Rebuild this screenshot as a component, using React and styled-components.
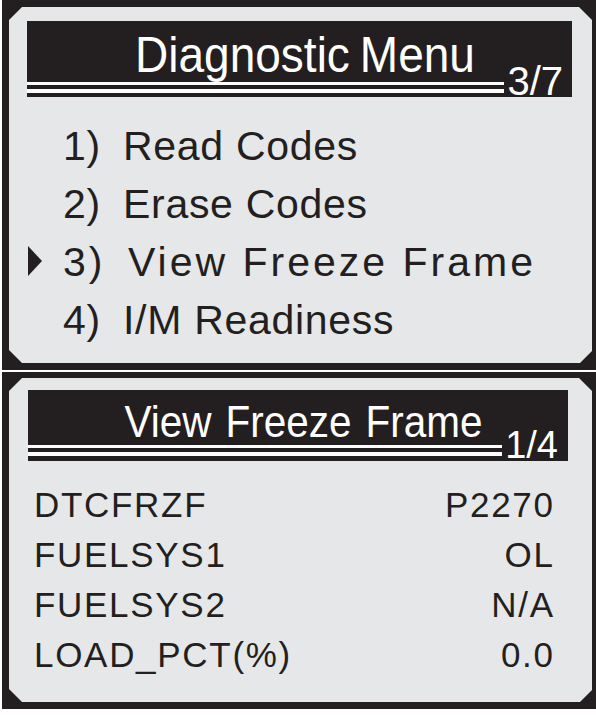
import React from "react";
import styled, { createGlobalStyle } from "styled-components";

const ink = "#231f20";
const paper = "#e6e7e8";

const GlobalStyle = createGlobalStyle`
  html, body {
    margin: 0;
    padding: 0;
    background: #ffffff;
  }
  body {
    font-family: "Liberation Sans", Arial, sans-serif;
    color: ${ink};
  }
`;

const Page = styled.div`
  display: flex;
  flex-direction: column;
  gap: 2px;
  width: 596px;
`;

const Screen = styled.div`
  margin-left: 2px;
  width: 594px;
  height: ${(p) => p.$height}px;
  box-sizing: border-box;
  padding: ${(p) => p.$top}px 4px 7px 7px;
  background: ${ink};
  display: flex;
`;

const Panel = styled.div`
  flex: 1;
  background: ${paper};
  box-sizing: border-box;
  padding: ${(p) => p.$pad};
  clip-path: polygon(
    13px 0,
    calc(100% - 13px) 0,
    100% 13px,
    100% calc(100% - 12px),
    calc(100% - 12px) 100%,
    13px 100%,
    0 calc(100% - 13px),
    0 13px
  );
`;

const Header = styled.div`
  display: grid;
  height: ${(p) => p.$height}px;
  background: ${ink};
  color: #ffffff;
`;

const Title = styled.div`
  grid-area: 1 / 1;
  align-self: start;
  text-align: center;
  padding-left: 12px;
  margin-top: ${(p) => p.$top}px;
  font-size: ${(p) => p.$size}px;
  line-height: 1;
  word-spacing: ${(p) => p.$words}px;
  transform: scaleX(0.92);
`;

const Footer = styled.div`
  grid-area: 1 / 1;
  align-self: end;
  display: flex;
  align-items: flex-end;
  padding: 0 ${(p) => p.$right}px ${(p) => p.$bottom}px 0;
`;

const Rule = styled.div`
  flex: 1;
  height: 4px;
  border-top: 3px solid #ffffff;
  border-bottom: 4px solid #ffffff;
  margin: 0 3px ${(p) => p.$lift}px 0;
`;

const Counter = styled.span`
  font-size: ${(p) => p.$size}px;
  line-height: ${(p) => p.$size - 10}px;
`;

const Menu = styled.ul`
  list-style: none;
  margin: 20px 0 0;
  padding: 0 0 0 1px;
`;

const MenuRow = styled.li`
  display: flex;
  align-items: center;
  height: 58px;
  font-size: 41px;
  line-height: 58px;
  letter-spacing: ${(p) => (p.$selected ? 3 : 0.7)}px;
`;

const Marker = styled.span`
  width: 35px;
  display: flex;
  align-items: center;
  &::before {
    content: "";
    display: ${(p) => (p.$on ? "block" : "none")};
    border-top: 15px solid transparent;
    border-bottom: 15px solid transparent;
    border-left: 14px solid ${ink};
    margin-top: -2px;
  }
`;

const Num = styled.span`
  width: 60px;
`;

const Label = styled.span`
  margin-left: ${(p) => (p.$selected ? 5 : 0)}px;
`;

const Data = styled.div`
  margin-top: 19px;
  padding: 0 15px 0 6px;
`;

const DataRow = styled.div`
  display: flex;
  justify-content: space-between;
  height: 50px;
  font-size: 35px;
  line-height: 50px;
  letter-spacing: 1.7px;
`;

const Value = styled.span`
  margin-right: -1.7px;
`;

const menuItems = [
  ["1)", "Read Codes"],
  ["2)", "Erase Codes"],
  ["3)", "View Freeze Frame"],
  ["4)", "I/M Readiness"],
];

const freezeData = [
  ["DTCFRZF", "P2270"],
  ["FUELSYS1", "OL"],
  ["FUELSYS2", "N/A"],
  ["LOAD_PCT(%)", "0.0"],
];

function ScreenHeader({ title, count, height, titleSize, titleTop, words, countSize, right, bottom, lift }) {
  return (
    <Header $height={height}>
      <Title $size={titleSize} $top={titleTop} $words={words}>
        {title}
      </Title>
      <Footer $right={right} $bottom={bottom}>
        <Rule $lift={lift} />
        <Counter $size={countSize}>{count}</Counter>
      </Footer>
    </Header>
  );
}

export default function App() {
  const selected = 2;
  return (
    <>
      <GlobalStyle />
      <Page>
        <Screen $height={370} $top={7}>
          <Panel $pad="14px 20px 0 18px">
            <ScreenHeader
              title="Diagnostic Menu"
              count="3/7"
              height={76}
              titleSize={50}
              titleTop={9}
              words={-3}
              countSize={40}
              right={9}
              bottom={1}
              lift={3}
            />
            <Menu>
              {menuItems.map(([num, label], i) => (
                <MenuRow key={num} $selected={i === selected}>
                  <Marker $on={i === selected} />
                  <Num>{num}</Num>
                  <Label $selected={i === selected}>{label}</Label>
                </MenuRow>
              ))}
            </Menu>
          </Panel>
        </Screen>
        <Screen $height={337} $top={6}>
          <Panel $pad="12px 24px 0 19px">
            <ScreenHeader
              title="View Freeze Frame"
              count="1/4"
              height={71}
              titleSize={44}
              titleTop={10}
              words={3}
              countSize={38}
              right={10}
              bottom={2}
              lift={3}
            />
            <Data>
              {freezeData.map(([name, value]) => (
                <DataRow key={name}>
                  <span>{name}</span>
                  <Value>{value}</Value>
                </DataRow>
              ))}
            </Data>
          </Panel>
        </Screen>
      </Page>
    </>
  );
}
